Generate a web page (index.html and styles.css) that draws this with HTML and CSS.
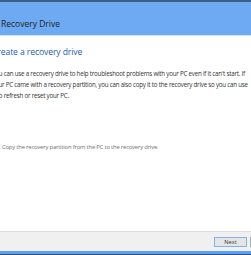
FILE: index.html
```html
<!DOCTYPE html>
<html lang="en">
  <head>
    <meta charset="UTF-8" />
    <meta name="viewport" content="width=device-width, initial-scale=1.0" />
    <title>Recovery Drive</title>
    <link rel="stylesheet" href="styles.css">
  </head>
  <body>
    <div class="wrap">
      <div class="titlebar">
        <div class="title">Recovery Drive</div>
      </div>

      <div class="content">
        <h1 class="heading">Create a recovery drive</h1>
        <p class="text">
          You can use a recovery drive to help troubleshoot problems with your PC even if it can't start. If<br>
          your PC came with a recovery partition, you can also copy it to the recovery drive so you can use<br>
          it to refresh or reset your PC.
        </p>

        <label class="check">
          <span class="box"></span>
          <span class="label">Copy the recovery partition from the PC to the recovery drive.</span>
        </label>
      </div>

      <div class="footer">
        <div class="btn default">Next</div>
        <div class="btn">Cancel</div>
      </div>
      <div class="taskbar"></div>
    </div>
  </body>
</html>
```

FILE: styles.css
```css
* {
  margin: 0;
  padding: 0;
  box-sizing: border-box;
}

html,
body {
  width: 251px;
  height: 255px;
  overflow: hidden;
  background: #fff;
}

.wrap {
  display: flex;
  flex-direction: column;
  height: 255px;
  font-family: "Open Sans", "Noto Sans", sans-serif;
  color: #333;
}

.titlebar {
  height: 36px;
  border-top: 2px solid #3d5f86;
  border-bottom: 1px solid #d6e2ef;
  background: #6eaaf3;
  padding: 16px 0 0 1px;
}

.title {
  font-size: 8.5px;
  color: #1e1e1e;
}

.content {
  flex: 1;
  margin-left: -8px;
  padding-top: 10px;
}

.heading {
  font-size: 8.6px;
  font-weight: normal;
  color: #1f5cb0;
  letter-spacing: -0.1px;
}

.text {
  margin-top: 10px;
  font-size: 6.2px;
  line-height: 11px;
  white-space: nowrap;
  letter-spacing: -0.21px;
}

.check {
  display: flex;
  align-items: center;
  gap: 3px;
  margin-top: 42px;
}

/* disabled checkbox, sits just off the left edge */
.check .box {
  width: 7px;
  height: 7px;
  border: 1px solid #e2e2e2;
}

.check .label {
  font-size: 5.9px;
  color: #707070;
  letter-spacing: -0.2px;
}

.footer {
  height: 20px;
  border-top: 1px solid #dcdcdc;
  background: #f0f0f0;
  display: flex;
  align-items: center;
  gap: 3px;
  padding-left: 214px;
}

.btn {
  flex: none;
  width: 33px;
  height: 10px;
  border: 1px solid #acacac;
  background: #e5e5e5;
  font-size: 5.6px;
  line-height: 8px;
  text-align: center;
  color: #333;
}

.btn.default {
  border-color: #7eb4ea;
}

.taskbar {
  height: 4px;
  background: #5f9ff0;
  border-bottom: 1px solid #2b4f7d;
}
```
